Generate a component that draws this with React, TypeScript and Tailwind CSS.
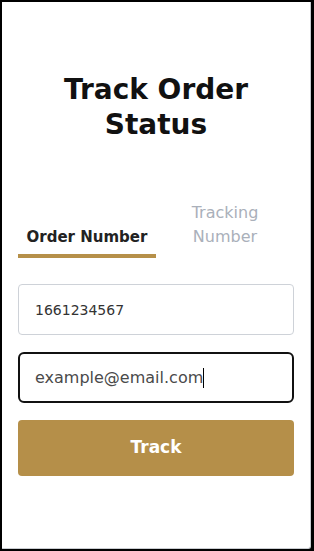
import React from "react";

export default function App() {
  return (
    <div className="h-screen w-full bg-black pt-[2px] pl-[2px] pr-[3px] pb-[2px]" style={{ fontFamily: '"DejaVu Sans", sans-serif' }}>
      <div className="h-full w-full bg-white border-r border-b border-[#c9ccd1] rounded-br-[3px] px-4 pt-[70px] flex flex-col">
        <h1 className="text-center text-[28px] leading-[35px] font-bold text-[#111]">
          Track Order
          <br />
          Status
        </h1>
        <div className="mt-[59px] grid grid-cols-2 items-end">
          <button className="text-[15px] leading-[24px] font-bold text-[#222] pb-[5px] border-b-4 border-[#b69049] text-center">
            Order Number
          </button>
          <button className="text-[16px] leading-[24px] text-[#aab0ba] pb-[5px] border-b-4 border-transparent text-center">
            Tracking
            <br />
            Number
          </button>
        </div>
        <input
          className="mt-[26px] h-[51px] w-full border border-[#ced2d8] rounded-[4px] px-4 text-[14px] text-[#333] outline-none"
          defaultValue="1661234567"
          style={{ fontFamily: '"DejaVu Sans", sans-serif' }}
        />
        <div className="mt-[17px] h-[51px] w-full border-2 border-[#111] rounded-[6px] px-[15px] flex items-center text-[16px] text-[#4a4a4a]">
          <span>example@email.com</span>
          <span className="inline-block w-px h-[20px] bg-black" />
        </div>
        <button className="mt-[17px] h-[56px] w-full bg-[#b58f49] rounded-[4px] text-white text-[17px] font-bold">
          Track
        </button>
      </div>
    </div>
  );
}
